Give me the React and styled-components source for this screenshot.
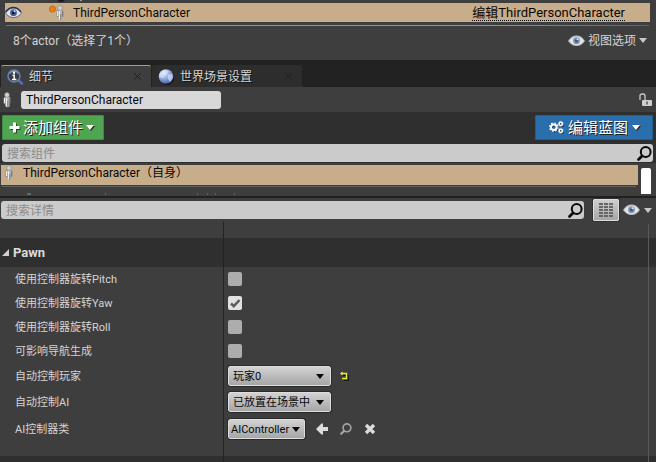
import React, { useState } from "react";
import styled, { createGlobalStyle, css } from "styled-components";

const Global = createGlobalStyle`
  * { box-sizing: border-box; }
  body {
    margin: 0;
    background: #3e3e3e;
    color: #d4d4d4;
    font: 12px/16px Roboto, "Noto Sans CJK SC", sans-serif;
    overflow: hidden;
  }
  button, input, select { font: inherit; margin: 0; }
`;

const Page = styled.main`
  display: flex;
  flex-direction: column;
  min-height: 100vh;
`;

const Svg = styled.svg`
  display: block;
  flex: none;
  overflow: visible;
`;

/* Outliner */
const Outliner = styled.section`
  display: flex;
  flex-direction: column;
  height: 60px;
`;
const CutRow = styled.div`
  height: 3px;
  overflow: hidden;
`;
const ActorRow = styled.div`
  display: flex;
  align-items: center;
  height: 19px;
  margin: 0 6px 0 5px;
  padding-right: 25px;
  background: #c8ad8a;
  color: #080808;
`;
const ActorIcon = styled.span`
  margin-left: 27px;
  margin-right: 9px;
`;
const EditLink = styled.a`
  margin-left: auto;
  color: #080808;
  text-decoration: none;
  font-size: 13px;
  line-height: 15px;
  border-bottom: 1px dotted #080808;
`;
const Rule = styled.div`
  height: 1px;
  margin: 3px 7px 0 6px;
  background: linear-gradient(90deg, #777070, #9b9190 25%, #9b9190 75%, #655f5f);
`;
const Status = styled.div`
  display: flex;
  align-items: center;
  justify-content: space-between;
  flex: 1;
  padding: 0 9px 5px 13px;
`;
const FlatButton = styled.button`
  display: flex;
  align-items: center;
  gap: ${(p) => p.$gap || 0}px;
  padding: 0;
  border: 0;
  background: none;
  color: inherit;
`;

/* Tabs */
const Tabs = styled.nav`
  display: flex;
  align-items: flex-end;
  gap: 1px;
  height: 27px;
  padding-left: 1px;
  background: #222;
`;
const Tab = styled.div`
  display: flex;
  align-items: center;
  width: 150px;
  height: 22px;
  padding: 0 10px 0 6px;
  border-top: 1px solid ${(p) => (p.$active ? "#b8a522" : "#2d2d2d")};
  border-radius: 2px 2px 0 0;
  background: ${(p) => (p.$active ? "#3e3e3e" : "#2d2d2d")};
`;
const TabButton = styled(FlatButton)`
  flex: 1;
  text-shadow: 1px 1px 0 #111;
`;

/* Name and toolbar */
const NameRow = styled.div`
  display: flex;
  align-items: center;
  height: 25px;
  padding: 0 4px 0 3px;
`;
const NameInput = styled.input`
  width: 200px;
  height: 18px;
  margin-left: 10px;
  padding: 0 5px;
  border: 0;
  border-radius: 3px;
  background: #d8d8d8;
  color: #080808;
`;
const LockButton = styled(FlatButton)`
  margin-left: auto;
`;
const Toolbar = styled.div`
  display: flex;
  justify-content: space-between;
  padding: 3px 3px 4px 2px;
  background: #2f2f2f;
`;
const ActionButton = styled.button`
  display: flex;
  align-items: center;
  gap: ${(p) => p.$gap}px;
  height: 25px;
  padding: 0 ${(p) => p.$end}px 0 ${(p) => p.$start}px;
  border: 1px solid ${(p) => (p.$tone === "green" ? "#3d8f40" : "#21618f")};
  border-radius: 1px;
  background: ${(p) => (p.$tone === "green" ? "#50a551" : "#2a6fac")};
  color: #fff;
  font-size: 15px;
  line-height: 22px;
  text-shadow: 1px 1px 0 #222;
`;
const SearchBox = styled.label`
  display: flex;
  align-items: center;
  flex: 1;
  height: 18px;
  padding-right: 1px;
  border-radius: 3px;
  background: #cbcbcb;
`;
const SearchInput = styled.input`
  flex: 1;
  min-width: 0;
  height: 18px;
  padding: 1px 5px 0;
  border: 0;
  background: none;
  color: #111;
  &::placeholder { color: #8c8c8c; opacity: 1; }
`;
const ComponentSearch = styled.div`
  display: flex;
  padding: 0 3px 1px 2px;
  background: #2f2f2f;
`;

/* Component tree */
const Tree = styled.section`
  display: flex;
  height: 35px;
  padding: 2px 5px 2px 1px;
  border-bottom: 2px solid #202020;
`;
const TreeList = styled.div`
  flex: 1;
`;
const TreeRow = styled.div`
  display: flex;
  align-items: center;
  gap: 10px;
  height: 20px;
  padding: 0 0 4px 4px;
  background: #c8ad8a;
  color: #080808;
`;
const TreeRule = styled.div`
  height: 1px;
  margin: 1px 2px 6px 1px;
  background: #5d6163;
`;
const Thumb = styled.div`
  width: 10px;
  height: 26px;
  margin: 3px 0 0 3px;
  background: #fff;
  border-radius: 2px 2px 0 0;
`;

/* Details */
const DetailsBar = styled.div`
  display: flex;
  align-items: center;
  height: 24px;
  padding: 0 4px 0 1px;
`;
const GridButton = styled.button`
  display: grid;
  place-items: center;
  width: 26px;
  height: 22px;
  margin: 0 4px 0 9px;
  padding: 0;
  border: 1px solid #dedede;
  border-radius: 1px;
  background: linear-gradient(#cecece, #a6a6a6);
  outline: 1px solid #303030;
`;
const Scroller = styled.section`
  position: relative;
  flex: 1;
  display: flex;
  flex-direction: column;
  &::after {
    content: "";
    position: absolute;
    top: 2px;
    bottom: 0;
    right: 7px;
    width: 1px;
    background: #5a5a5a;
  }
`;
const split = css`
  display: grid;
  grid-template-columns: 34% 1fr;
  > :last-child { border-left: 1px solid #232323; }
`;
const Spacer = styled.div`
  ${split}
  height: ${(p) => p.$h}px;
`;
const Category = styled.h2`
  ${split}
  height: 29px;
  margin: 0;
  background: #2f2f2f;
  color: #dcdcdc;
  font-size: 13px;
  font-weight: 700;
  text-shadow: 1px 1px 0 #000;
`;
const CategoryTitle = styled(FlatButton)`
  padding-left: 2px;
`;
const PropRow = styled.div`
  ${split}
  height: ${(p) => p.$h}px;
  font-size: 11px;
`;
const PropLabel = styled.label`
  display: flex;
  align-items: center;
  padding: 2px 0 0 15px;
`;
const PropValue = styled.div`
  display: flex;
  align-items: center;
  padding-left: 4px;
`;
const CheckWrap = styled.span`
  display: grid;
  > * { grid-area: 1 / 1; }
  svg { pointer-events: none; }
`;
const Check = styled.input`
  appearance: none;
  width: 14px;
  height: 14px;
  border-radius: 2px;
  background: #adadad;
  &:checked { background: #e2e2e2; }
`;
const SelectWrap = styled.span`
  display: grid;
  align-items: center;
  width: ${(p) => p.$w}px;
  height: 20px;
  border: 1px solid #dedede;
  border-radius: 2px;
  outline: 1px solid #2a2a2a;
  background: linear-gradient(#d2d2d2, #a6a6a6);
  > * { grid-area: 1 / 1; }
  svg {
    justify-self: end;
    margin-right: ${(p) => p.$caret}px;
    pointer-events: none;
  }
`;
const Select = styled.select`
  appearance: none;
  width: 100%;
  height: 18px;
  padding: 2px 0 0 ${(p) => p.$pad}px;
  border: 0;
  background: none;
  color: #080808;
`;
const Tools = styled.span`
  display: flex;
  gap: 12px;
  margin-left: ${(p) => p.$start}px;
`;
const NextCategory = styled.div`
  ${split}
  flex: 1;
  min-height: 6px;
  background: #2f2f2f;
`;

const Caret = ({ fill = "#c8c8c8", w = 8, shadow }) => (
  <Svg width={w} height="5" viewBox="0 0 8 5">
    {shadow && <path d="M1 1h8L5 6z" fill="#222" />}
    <path d="M0 0h8L4 5z" fill={fill} />
  </Svg>
);

const Eye = ({ dark }) => (
  <Svg width="17" height="12" viewBox="0 0 17 12">
    <path d="M0 6C3 1.500 5.500.5 8.500.5S14 1.500 17 6c-3 4-5.500 5-8.500 5S3 10 0 6z" fill={dark ? "#6b7180" : "#b4b7bb"} />
    <path d="M1 6c3-3.500 5-4.500 7.500-4.500S13.500 2.500 16 6c-2.500 3-5 4-7.500 4S3.500 9 1 6z" fill="#e4e4e6" />
    {dark && <path d="M.5 5C3 1.500 6 .5 8.500.5s5 1 7.500 4.500" fill="none" stroke="#26345a" strokeWidth="1.300" />}
    <circle cx="8.500" cy="5.700" r="3.400" fill={dark ? "#49629c" : "#8195b2"} />
    <circle cx="8.500" cy="5.700" r="1.700" fill={dark ? "#101a38" : "#3f587e"} />
    <circle cx="9.500" cy="4.300" r="1" fill="#dce7f7" />
  </Svg>
);

const Figure = ({ dot }) => (
  <Svg width={dot ? 15 : 8} height="16" viewBox={dot ? "-7 0 15 16" : "0 0 8 16"}>
    <rect x=".5" y="4.500" width="7" height="8" rx="2" fill="#8a8a88" />
    <path d="M2 5h4.500v9.500q-2 1.500-4 0z" fill="#b9b9b7" />
    <circle cx="4" cy="3" r="2.400" fill="#d2d2d0" stroke="#80807e" strokeWidth=".6" />
    <path d="M3.500 6v8.500M1.500 6v5" stroke="#ececea" strokeWidth="1" />
    <path d="M4.800 9v6M6.400 6v6" stroke="#6f6f6d" strokeWidth=".8" />
    {dot && <circle cx="-3.500" cy="4" r="3.100" fill="#f07d08" stroke="#9a5a1e" strokeWidth=".6" />}
  </Svg>
);

const DetailsIcon = () => (
  <Svg width="17" height="16" viewBox="0 0 17 16">
    <path d="M11 11l4 3.500" stroke="#526fbd" strokeWidth="2.600" strokeLinecap="round" />
    <circle cx="7" cy="7" r="6" fill="#3a3d42" stroke="#6580bd" strokeWidth="1.500" />
    <path d="M2.500 5a5 5 0 019 0" stroke="#b5c2de" fill="none" strokeWidth=".8" />
    <circle cx="7" cy="3.800" r="1.200" fill="#fff" />
    <path d="M5.500 6.300h1.700v3.900M5 10.500h4.400" stroke="#fff" strokeWidth="1.400" fill="none" />
  </Svg>
);

const Globe = () => (
  <Svg width="16" height="16" viewBox="0 0 16 16">
    <defs>
      <radialGradient id="sea" cx=".35" cy=".25" r=".8">
        <stop offset="0" stopColor="#e4edfc" />
        <stop offset=".5" stopColor="#94aee2" />
        <stop offset="1" stopColor="#405aa3" />
      </radialGradient>
    </defs>
    <ellipse cx="9" cy="9" rx="7" ry="7" fill="#151515" />
    <circle cx="8" cy="7.500" r="7.300" fill="url(#sea)" />
    <path d="M2 4l4-3 4 1-1 3-3 1-1 3-4-1zM10 6l4-1 1 4-3 4-2-3z" fill="#dce7f8" opacity=".65" />
  </Svg>
);

const Cross = () => (
  <Svg width="7" height="7" viewBox="0 0 7 7">
    <path d="M.5.5l6 6M6.500.5l-6 6" stroke="#1d1d1d" strokeWidth="1" />
  </Svg>
);

const Lock = () => (
  <Svg width="13" height="14" viewBox="0 0 13 14">
    <path d="M1 7V3q0-2 2-2h1q2 0 2 2v4" fill="none" stroke="#c9c9c9" strokeWidth="1.300" />
    <rect x="3" y="7" width="10" height="6" rx="1" fill="#d0d0d0" />
    <path d="M8 8.500v3" stroke="#444" strokeWidth="1.300" />
  </Svg>
);

const Magnifier = ({ size = 15, color = "#080808" }) => (
  <Svg width={size} height={size} viewBox="0 0 15 15">
    <circle cx="8.700" cy="6" r="4.900" fill="none" stroke={color} strokeWidth="2" />
    <path d="M5 10l-3.500 3.500" stroke={color} strokeWidth="2.800" strokeLinecap="round" />
  </Svg>
);

const Plus = () => (
  <Svg width="11" height="11" viewBox="0 0 11 11">
    <path d="M6.500 1.500v10M1.500 6.500h10" stroke="#24482a" strokeWidth="3" />
    <path d="M5.500.5v10M.5 5.500h10" stroke="#fff" strokeWidth="3" />
  </Svg>
);

const Gears = () => (
  <Svg width="15" height="13" viewBox="0 0 15 13">
    <g fill="none" stroke="#173a58" transform="translate(1 1)">
      <circle cx="4.800" cy="6.200" r="3" strokeWidth="2" />
      <circle cx="11.800" cy="2.800" r="1.600" strokeWidth="1.500" />
      <circle cx="11.800" cy="9.800" r="1.600" strokeWidth="1.500" />
    </g>
    <g fill="none" stroke="#fff">
      <circle cx="4.800" cy="6.200" r="2.800" strokeWidth="2" />
      <circle cx="4.800" cy="6.200" r="4.200" strokeWidth="1.200" strokeDasharray="1.650 1.650" />
      <circle cx="11.800" cy="2.800" r="1.600" strokeWidth="1.500" />
      <circle cx="11.800" cy="9.800" r="1.600" strokeWidth="1.500" />
      <circle cx="11.800" cy="2.800" r="2.500" strokeWidth=".7" strokeDasharray="1 1" />
      <circle cx="11.800" cy="9.800" r="2.500" strokeWidth=".7" strokeDasharray="1 1" />
    </g>
  </Svg>
);

const Matrix = () => (
  <Svg width="14" height="14" viewBox="0 0 14 14">
    {[0, 3, 6, 9, 12].map((y) => (
      <path key={y} d={`M0 ${y + 1}h4M5 ${y + 1}h4M10 ${y + 1}h4`} stroke="#666" strokeWidth="2" />
    ))}
  </Svg>
);

const Expander = () => (
  <Svg width="7" height="7" viewBox="0 0 7 7">
    <path d="M7 0v7H0z" fill="#cfcfcf" />
  </Svg>
);

const Tick = () => (
  <Svg width="14" height="14" viewBox="0 0 14 14">
    <path d="M3 7.500l2.800 2.700L11.500 4" fill="none" stroke="#5c5c5c" strokeWidth="2.500" />
  </Svg>
);

const Reset = () => (
  <Svg width="8" height="8" viewBox="0 0 8 8">
    <path d="M2 2.500h5.500v5H3" transform="translate(1 1)" fill="none" stroke="#171717" />
    <path d="M1 1.500h5.500v5H2" fill="none" stroke="#e9ee2e" strokeWidth="1.400" />
    <path d="M0 1.500L2.500-.5v4z" fill="#e9ee2e" />
  </Svg>
);

const ArrowLeft = () => (
  <Svg width="12" height="12" viewBox="0 0 12 12">
    <path d="M0 6l5.500-5.500h1.500v3.500h5v4H7v3.500H5.500z" fill="#dcdcdc" />
  </Svg>
);

const Clear = () => (
  <Svg width="12" height="12" viewBox="0 0 12 12">
    <path d="M2 2l8 8M10 2l-8 8" stroke="#dcdcdc" strokeWidth="3.200" />
  </Svg>
);

const TopRemnant = () => (
  <Svg width="430" height="2" viewBox="0 0 430 2">
    <path d="M57 0h8l-2 2h-4z" fill="#1c1c1c" />
    <path d="M80 0h2" stroke="#999" strokeWidth="2" />
  </Svg>
);

const TreeRemnant = () => (
  <Svg width="240" height="2" viewBox="0 0 240 2">
    <path d="M26 1h4" stroke="#719ba8" />
    <path d="M104 1h1M196 1h1M206 1h1M214 1h1M233 1h1" stroke="#888" />
  </Svg>
);

const Toggle = ({ id, label, initial = false }) => {
  const [on, setOn] = useState(initial);
  return (
    <PropRow $h={24}>
      <PropLabel htmlFor={id}>{label}</PropLabel>
      <PropValue>
        <CheckWrap>
          <Check id={id} type="checkbox" checked={on} onChange={() => setOn(!on)} />
          {on && <Tick />}
        </CheckWrap>
      </PropValue>
    </PropRow>
  );
};

const Choice = ({ id, label, option, h = 26, w = 103, caret = 6, pad = 4, children }) => (
  <PropRow $h={h}>
    <PropLabel htmlFor={id}>{label}</PropLabel>
    <PropValue>
      <SelectWrap $w={w} $caret={caret}>
        <Select id={id} $pad={pad}>
          <option>{option}</option>
        </Select>
        <Caret fill="#080808" />
      </SelectWrap>
      {children}
    </PropValue>
  </PropRow>
);

export default function App() {
  return (
    <>
      <Global />
      <Page>
        <Outliner>
          <CutRow><TopRemnant /></CutRow>
          <ActorRow>
            <FlatButton aria-label="可见性"><Eye dark /></FlatButton>
            <ActorIcon><Figure dot /></ActorIcon>
            <span>ThirdPersonCharacter</span>
            <EditLink href="#edit">编辑ThirdPersonCharacter</EditLink>
          </ActorRow>
          <Rule />
          <Status>
            <span>8个actor（选择了1个）</span>
            <FlatButton $gap={3}><Eye />视图选项<Caret /></FlatButton>
          </Status>
        </Outliner>

        <Tabs>
          <Tab $active>
            <TabButton $gap={5}><DetailsIcon />细节</TabButton>
            <FlatButton aria-label="关闭"><Cross /></FlatButton>
          </Tab>
          <Tab>
            <TabButton $gap={6}><Globe />世界场景设置</TabButton>
            <FlatButton aria-label="关闭"><Cross /></FlatButton>
          </Tab>
        </Tabs>

        <NameRow>
          <Figure />
          <NameInput aria-label="名称" defaultValue="ThirdPersonCharacter" />
          <LockButton aria-label="锁定"><Lock /></LockButton>
        </NameRow>

        <Toolbar>
          <ActionButton $tone="green" $gap={3} $start={6} $end={9}>
            <Plus />添加组件<Caret fill="#fff" shadow />
          </ActionButton>
          <ActionButton $tone="blue" $gap={4} $start={13} $end={12}>
            <Gears />编辑蓝图<Caret fill="#fff" shadow />
          </ActionButton>
        </Toolbar>
        <ComponentSearch>
          <SearchBox>
            <SearchInput aria-label="搜索组件" placeholder="搜索组件" />
            <Magnifier />
          </SearchBox>
        </ComponentSearch>

        <Tree>
          <TreeList>
            <TreeRow><Figure />ThirdPersonCharacter（自身）</TreeRow>
            <TreeRule />
            <TreeRemnant />
          </TreeList>
          <Thumb />
        </Tree>

        <DetailsBar>
          <SearchBox>
            <SearchInput aria-label="搜索详情" placeholder="搜索详情" />
            <Magnifier />
          </SearchBox>
          <GridButton aria-label="属性矩阵"><Matrix /></GridButton>
          <FlatButton $gap={4} aria-label="视图选项"><Eye /><Caret /></FlatButton>
        </DetailsBar>

        <Scroller>
          <Spacer $h={16}><span /><span /></Spacer>
          <Category>
            <CategoryTitle $gap={4}><Expander />Pawn</CategoryTitle>
            <span />
          </Category>
          <Toggle id="pitch" label="使用控制器旋转Pitch" />
          <Toggle id="yaw" label="使用控制器旋转Yaw" initial />
          <Toggle id="roll" label="使用控制器旋转Roll" />
          <Toggle id="nav" label="可影响导航生成" />
          <Choice id="player" label="自动控制玩家" option="玩家0">
            <Tools $start={9}><FlatButton aria-label="重置"><Reset /></FlatButton></Tools>
          </Choice>
          <Choice id="ai" label="自动控制AI" option="已放置在场景中" />
          <Choice id="aiclass" label="AI控制器类" option="AIController" h={28} w={77} caret={4} pad={2}>
            <Tools $start={11}>
              <FlatButton aria-label="使用所选"><ArrowLeft /></FlatButton>
              <FlatButton aria-label="浏览"><Magnifier size={12} color="#a5a5a5" /></FlatButton>
              <FlatButton aria-label="清除"><Clear /></FlatButton>
            </Tools>
          </Choice>
          <Spacer $h={13}><span /><span /></Spacer>
          <NextCategory><span /><span /></NextCategory>
        </Scroller>
      </Page>
    </>
  );
}
